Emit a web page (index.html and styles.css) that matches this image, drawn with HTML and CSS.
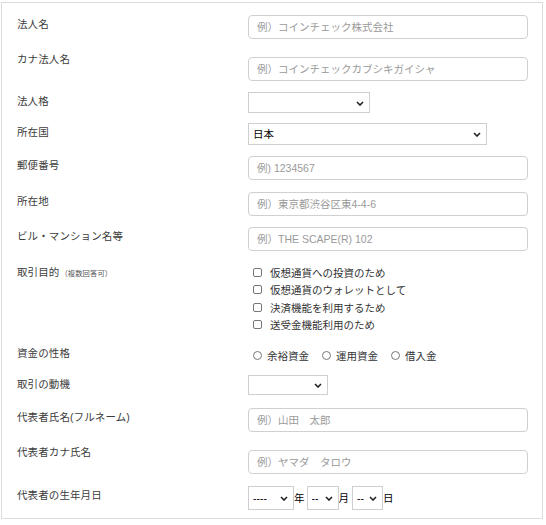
FILE: index.html
```html
<!DOCTYPE html>
<html lang="ja">
<head>
<meta charset="utf-8">
<title>法人情報</title>
<link rel="stylesheet" href="styles.css">
</head>
<body>
<div class="form">
  <div class="row">
    <div class="label">法人名</div>
    <div class="field"><input class="text" type="text" placeholder="例）コインチェック株式会社"></div>
  </div>
  <div class="row r-kana">
    <div class="label">カナ法人名</div>
    <div class="field"><input class="text" type="text" placeholder="例）コインチェックカブシキガイシャ"></div>
  </div>
  <div class="row">
    <div class="label">法人格</div>
    <div class="field">
      <span class="sel w-type"><select><option></option></select><svg class="chev" viewBox="0 0 8 5" width="8" height="5"><path d="M1 1 L4 4 L7 1" fill="none" stroke="#222" stroke-width="1.6"/></svg></span>
    </div>
  </div>
  <div class="row r-tight">
    <div class="label">所在国</div>
    <div class="field">
      <span class="sel w-country"><select><option>日本</option></select><svg class="chev" viewBox="0 0 8 5" width="8" height="5"><path d="M1 1 L4 4 L7 1" fill="none" stroke="#222" stroke-width="1.6"/></svg></span>
    </div>
  </div>
  <div class="row">
    <div class="label">郵便番号</div>
    <div class="field"><input class="text" type="text" placeholder="例) 1234567"></div>
  </div>
  <div class="row r-loose">
    <div class="label">所在地</div>
    <div class="field"><input class="text" type="text" placeholder="例）東京都渋谷区東4-4-6"></div>
  </div>
  <div class="row">
    <div class="label">ビル・マンション名等</div>
    <div class="field"><input class="text" type="text" placeholder="例）THE SCAPE(R) 102"></div>
  </div>
  <div class="row r-loose">
    <div class="label">取引目的<span class="note">（複数回答可）</span></div>
    <div class="field checks">
      <label class="check"><input type="checkbox"><span>仮想通貨への投資のため</span></label>
      <label class="check"><input type="checkbox"><span>仮想通貨のウォレットとして</span></label>
      <label class="check"><input type="checkbox"><span>決済機能を利用するため</span></label>
      <label class="check"><input type="checkbox"><span>送受金機能利用のため</span></label>
    </div>
  </div>
  <div class="row">
    <div class="label">資金の性格</div>
    <div class="field radios">
      <label class="radio"><input type="radio" name="fund"><span>余裕資金</span></label>
      <label class="radio"><input type="radio" name="fund"><span>運用資金</span></label>
      <label class="radio"><input type="radio" name="fund"><span>借入金</span></label>
    </div>
  </div>
  <div class="row">
    <div class="label">取引の動機</div>
    <div class="field">
      <span class="sel w-motive"><select class="short"><option></option></select><svg class="chev" viewBox="0 0 8 5" width="8" height="5"><path d="M1 1 L4 4 L7 1" fill="none" stroke="#222" stroke-width="1.6"/></svg></span>
    </div>
  </div>
  <div class="row r-wide">
    <div class="label">代表者氏名(フルネーム)</div>
    <div class="field"><input class="text" type="text" placeholder="例）山田　太郎"></div>
  </div>
  <div class="row r-kana">
    <div class="label">代表者カナ氏名</div>
    <div class="field"><input class="text" type="text" placeholder="例）ヤマダ　タロウ"></div>
  </div>
  <div class="row r-loose">
    <div class="label">代表者の生年月日</div>
    <div class="field date">
      <span class="sel w-year"><select class="tall"><option>----</option></select><svg class="chev" viewBox="0 0 8 5" width="8" height="5"><path d="M1 1 L4 4 L7 1" fill="none" stroke="#222" stroke-width="1.6"/></svg></span><span class="unit">年</span>
      <span class="sel w-month"><select class="tall"><option>--</option></select><svg class="chev" viewBox="0 0 8 5" width="8" height="5"><path d="M1 1 L4 4 L7 1" fill="none" stroke="#222" stroke-width="1.6"/></svg></span><span class="unit">月</span>
      <span class="sel w-day"><select class="tall"><option>--</option></select><svg class="chev" viewBox="0 0 8 5" width="8" height="5"><path d="M1 1 L4 4 L7 1" fill="none" stroke="#222" stroke-width="1.6"/></svg></span><span class="unit">日</span>
    </div>
  </div>
</div>
</body>
</html>
```
FILE: styles.css
```css
* { box-sizing: border-box; }
html, body { margin: 0; padding: 0; background: #fff; }
body {
  font-family: "Liberation Sans", "Noto Sans CJK JP", sans-serif;
  font-size: 10.5px;
  color: #3c3c3c;
}
.form {
  margin: 2px 4px 0 1px;
  border: 1px solid #dcdcdc;
  padding: 12px 13px 8px 15px;
  width: 542px;
}
.row {
  display: grid;
  grid-template-columns: 231px 280px;
  align-items: start;
  margin-top: 11px;
}
.row:first-child { margin-top: 0; }
.r-tight { margin-top: 10px; }
.r-loose { margin-top: 12px; }
.r-wide { margin-top: 13px; }
.r-kana .field { margin-top: 7px; }
.label {
  padding-top: 2px;
  line-height: 14px;
  white-space: nowrap;
  letter-spacing: 0.1px;
}
.note { font-size: 7.3px; color: #555; margin-left: 1px; }
.text {
  display: block;
  width: 280px;
  height: 24px;
  border: 1px solid #d0d0d0;
  border-radius: 4px;
  padding: 0 8px;
  font: inherit;
  font-size: 10.5px;
  color: #333;
  outline: none;
}
.text::placeholder { color: #9a9a9a; }
.sel { position: relative; display: inline-block; vertical-align: top; }
.sel select {
  -webkit-appearance: none;
  appearance: none;
  width: 100%;
  height: 21px;
  border: 1px solid #cfcfcf;
  border-radius: 0;
  background: #fff;
  font: inherit;
  font-size: 10.5px;
  color: #000;
  padding: 0 14px 0 4px;
  outline: none;
}
.sel select.short { height: 20px; }
.sel select.tall { height: 24px; }
.w-type { width: 122px; }
.w-country { width: 239px; }
.w-country select { height: 22px; }
.w-motive { width: 80px; }
.w-year { width: 46px; }
.w-month { width: 32px; margin-left: 2px; }
.w-day { width: 31px; margin-left: 3px; }
.chev {
  position: absolute;
  right: 6px;
  top: 50%;
  margin-top: -2px;
  pointer-events: none;
}
.date { display: flex; align-items: center; }
.unit { color: #000; line-height: 24px; }
.checks { padding-top: 1px; }
.check {
  display: flex;
  align-items: center;
  height: 17.33px;
  padding-left: 5px;
  color: #333;
}
.check input {
  -webkit-appearance: none;
  appearance: none;
  margin: 0 8px 0 0;
  width: 9px;
  height: 9px;
  border: 1px solid #777;
  border-radius: 2px;
  background: #fff;
}
.radios { display: flex; align-items: center; height: 17px; margin-top: 3px; padding-left: 5px; color: #333; }
.radio { display: flex; align-items: center; margin-right: 13px; }
.radio input {
  -webkit-appearance: none;
  appearance: none;
  margin: 0 5px 0 0;
  width: 9px;
  height: 9px;
  border: 1px solid #777;
  border-radius: 50%;
  background: #fff;
}
```
